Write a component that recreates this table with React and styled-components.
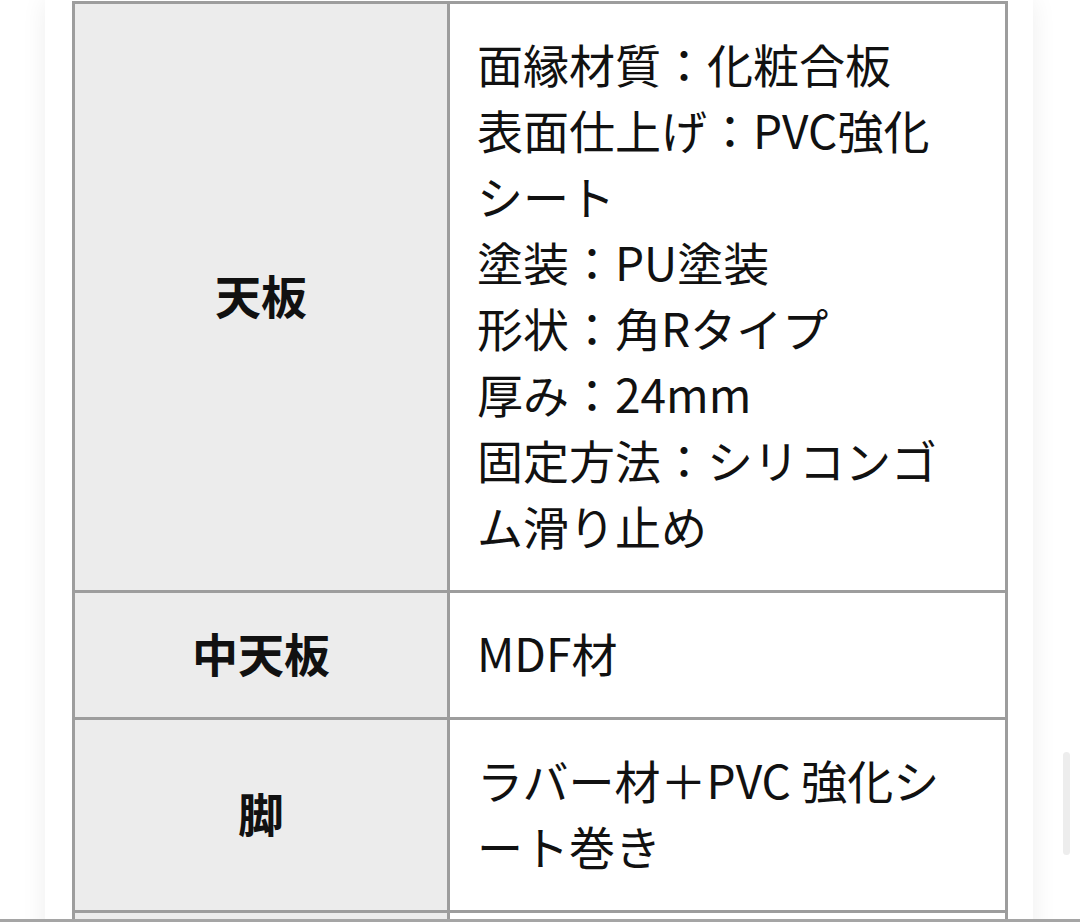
import React from 'react';
import styled, { createGlobalStyle } from 'styled-components';

const specs = [
  {
    label: '天板',
    lines: [
      '面縁材質：化粧合板',
      '表面仕上げ：PVC強化シート',
      '塗装：PU塗装',
      '形状：角Rタイプ',
      '厚み：24mm',
      '固定方法：シリコンゴム滑り止め',
    ],
  },
  { label: '中天板', lines: ['MDF材'] },
  { label: '脚', lines: ['ラバー材＋PVC 強化シート巻き'] },
];

function App() {
  return (
    <>
      <GlobalStyle />
      <Page>
        <Card>
          <SpecTable>
            <colgroup>
              <LabelCol />
              <col />
            </colgroup>
            <tbody>
              {specs.map((row) => (
                <tr key={row.label}>
                  <LabelCell>{row.label}</LabelCell>
                  <ValueCell>
                    {row.lines.map((line) => (
                      <Line key={line}>{line}</Line>
                    ))}
                  </ValueCell>
                </tr>
              ))}
              {/* next row, only its top edge is on screen */}
              <tr>
                <LabelCell $empty />
                <ValueCell $empty />
              </tr>
            </tbody>
          </SpecTable>
        </Card>
      </Page>
      <ScrollThumb />
      <BottomEdge />
    </>
  );
}

export default App;

const GlobalStyle = createGlobalStyle`
html, body {
    margin:0;
    padding:0;
    background:#fff;
    overflow:hidden;
}
body {
    font-family:"Noto Sans CJK JP", "Noto Sans", sans-serif;
    color:#111;
}
`

const Page = styled.div `
padding-left:45px;
height:922px;
overflow:hidden;
`

const Card = styled.div `
width:988px;
box-sizing:border-box;
min-height:922px;
padding:1px 25px 0 27px;
background:#fff;
box-shadow:0 0 24px rgba(0,0,0,0.07);
`

const SpecTable = styled.table `
width:100%;
border-collapse:collapse;
table-layout:fixed;
`

const LabelCol = styled.col `
width:375px;
`

const LabelCell = styled.th `
background:#ececec;
border:3px solid #9d9d9d;
padding:26px 16px 32px;
height:${(p) => (p.$empty ? '66px' : 'auto')};
font-size:46px;
line-height:66px;
font-weight:700;
text-align:center;
vertical-align:middle;
color:#111;
`

const ValueCell = styled.td `
background:#fff;
border:3px solid #9d9d9d;
padding:26px 36px 32px 27px;
height:${(p) => (p.$empty ? '66px' : 'auto')};
font-size:46px;
line-height:66px;
text-align:left;
vertical-align:middle;
color:#111;
`

const Line = styled.div `
word-break:break-all;
`

const ScrollThumb = styled.div `
position:fixed;
left:1063px;
top:752px;
width:7px;
height:103px;
border-radius:4px;
background:#ededed;
`

const BottomEdge = styled.div `
position:fixed;
left:0;
right:0;
bottom:0;
height:3px;
background:#a5a5a5;
`
